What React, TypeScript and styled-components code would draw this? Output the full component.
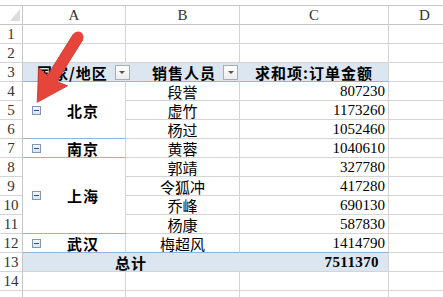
import React from 'react';
import styled, { createGlobalStyle, css } from 'styled-components';

const Global = createGlobalStyle`
  html, body {
    margin: 0;
    background: #fff;
    overflow: hidden;
  }
`;

const GRID = '#d4d4d4';
const BLUE_LINE = '#95b3d7';
const BAND = '#dce6f1';

type Place = { $r: number; $c: number; $cs?: number; $rs?: number };

// excel row n sits on grid row n + 2 (strip + column header come first)
const place = css<Place>`
  grid-row: ${(p) => p.$r + 2} / span ${(p) => p.$rs || 1};
  grid-column: ${(p) => p.$c} / span ${(p) => p.$cs || 1};
`;

const Sheet = styled.div`
  position: relative;
  display: grid;
  grid-template-columns: 23px 103px 114px 149px 72px;
  grid-template-rows: 6px 19px repeat(15, 19px);
  width: 443px;
  height: 297px;
  overflow: hidden;
  font-family: "Noto Sans CJK SC", "Noto Sans", sans-serif;
  color: #000;
`;

const Strip = styled.div`
  grid-row: 1;
  grid-column: 1 / -1;
  border-bottom: 1px solid #c6c6c6;
`;

const Corner = styled.div`
  grid-row: 2;
  grid-column: 1;
  display: flex;
  justify-content: flex-end;
  align-items: flex-end;
  padding: 0 2px 3px 0;
  border-right: 1px solid #c6c6c6;
  border-bottom: 1px solid #c6c6c6;
  &::after {
    content: '';
    width: 0;
    height: 0;
    border-left: 10px solid transparent;
    border-bottom: 12px solid #dcdcdc;
  }
`;

const ColHead = styled.div<{ $c: number }>`
  grid-row: 2;
  grid-column: ${(p) => p.$c};
  display: flex;
  align-items: center;
  justify-content: center;
  font-family: "Liberation Serif", serif;
  font-size: 15px;
  color: #333;
  border-right: 1px solid ${GRID};
  border-bottom: 1px solid #c6c6c6;
`;

const RowNum = styled.div<{ $r: number }>`
  grid-row: ${(p) => p.$r + 2};
  grid-column: 1;
  display: flex;
  align-items: center;
  justify-content: center;
  font-family: "Liberation Serif", serif;
  font-size: 15px;
  color: #333;
  border-right: 1px solid #c6c6c6;
  border-bottom: 1px solid ${GRID};
`;

const Cell = styled.div<Place>`
  ${place};
  border-right: 1px solid ${GRID};
  border-bottom: 1px solid ${GRID};
`;

const HeadCell = styled.div<Place & { $align: string; $pad?: number; $last?: boolean }>`
  ${place};
  display: flex;
  align-items: center;
  justify-content: ${(p) => p.$align};
  gap: 7px;
  padding-left: ${(p) => p.$pad || 0}px;
  background: ${BAND};
  border-right: 1px solid ${(p) => (p.$last ? GRID : BAND)};
  border-bottom: 1px solid ${BLUE_LINE};
  font-size: 15px;
  font-weight: bold;
  letter-spacing: 1px;
  white-space: nowrap;
  line-height: 1;
`;

const Label = styled.span<{ $grow?: boolean }>`
  flex: ${(p) => (p.$grow ? 1 : 'none')};
`;

const Dropdown = styled.span`
  flex: none;
  position: relative;
  width: 15px;
  height: 15px;
  box-sizing: border-box;
  border: 1px solid #acacac;
  background: linear-gradient(#ffffff, #ececec);
  display: flex;
  align-items: center;
  justify-content: center;
  margin-right: 1px;
  &::after {
    content: '';
    border-left: 3px solid transparent;
    border-right: 3px solid transparent;
    border-top: 3px solid #555;
    margin-top: 1px;
  }
`;

const GroupCell = styled.div<Place>`
  ${place};
  display: flex;
  align-items: center;
  padding-left: 9px;
  border-right: 1px solid ${GRID};
  border-bottom: 1px solid ${BLUE_LINE};
  font-size: 15px;
  font-weight: bold;
  letter-spacing: 1px;
  line-height: 1;
`;

const Collapse = styled.span`
  flex: none;
  width: 9px;
  height: 9px;
  box-sizing: border-box;
  border: 1px solid #8196b5;
  background: linear-gradient(#f4f7fb, #d9e2ee);
  display: flex;
  align-items: center;
  justify-content: center;
  &::after {
    content: '';
    width: 5px;
    height: 1px;
    background: #2f4f7f;
  }
`;

const City = styled.span`
  flex: 1;
  text-align: center;
`;

const NameCell = styled.div<Place & { $edge?: boolean }>`
  ${place};
  display: flex;
  align-items: center;
  justify-content: center;
  border-right: 1px solid ${GRID};
  border-bottom: 1px solid ${(p) => (p.$edge ? BLUE_LINE : GRID)};
  font-size: 15px;
  line-height: 1;
`;

const ValueCell = styled.div<Place & { $edge?: boolean }>`
  ${place};
  display: flex;
  align-items: center;
  justify-content: flex-end;
  padding-right: 3px;
  border-right: 1px solid ${GRID};
  border-bottom: 1px solid ${(p) => (p.$edge ? BLUE_LINE : GRID)};
  font-family: "Liberation Serif", serif;
  font-size: 15px;
  line-height: 1;
`;

const TotalCell = styled.div<Place & { $align: string; $pad?: number; $last?: boolean }>`
  ${place};
  display: flex;
  align-items: center;
  justify-content: ${(p) => p.$align};
  padding-right: ${(p) => p.$pad || 0}px;
  background: ${BAND};
  border-right: 1px solid ${(p) => (p.$last ? GRID : BAND)};
  border-bottom: 1px solid ${GRID};
  font-size: 15px;
  font-weight: bold;
  letter-spacing: 1px;
  line-height: 1;
`;

const Digits = styled.span`
  font-family: "Liberation Serif", serif;
  letter-spacing: 0.4px;
`;

const Arrow = styled.svg`
  position: absolute;
  left: 0;
  top: 0;
  pointer-events: none;
`;

const groups: { city: string; rows: [string, number][] }[] = [
  { city: '北京', rows: [['段誉', 807230], ['虚竹', 1173260], ['杨过', 1052460]] },
  { city: '南京', rows: [['黄蓉', 1040610]] },
  { city: '上海', rows: [['郭靖', 327780], ['令狐冲', 417280], ['乔峰', 690130], ['杨康', 587830]] },
  { city: '武汉', rows: [['梅超风', 1414790]] },
];

const App = () => {
  const cells: React.ReactNode[] = [];
  let r = 4;
  let total = 0;
  groups.forEach((g) => {
    cells.push(
      <GroupCell key={'g' + r} $r={r} $c={2} $rs={g.rows.length}>
        <Collapse />
        <City>{g.city}</City>
      </GroupCell>,
    );
    g.rows.forEach(([name, amount]) => {
      const edge = r === 12;
      total += amount;
      cells.push(
        <NameCell key={'n' + r} $r={r} $c={3} $edge={edge}>{name}</NameCell>,
        <ValueCell key={'v' + r} $r={r} $c={4} $edge={edge}>{amount}</ValueCell>,
        <Cell key={'d' + r} $r={r} $c={5} />,
      );
      r += 1;
    });
  });

  const plainRows = [1, 2, 14, 15];

  return (
    <>
      <Global />
      <Sheet>
        <Strip />
        <Corner />
        {['A', 'B', 'C', 'D'].map((l, i) => (
          <ColHead key={l} $c={i + 2}>{l}</ColHead>
        ))}
        {/* row 15 only peeks in at the bottom edge, its number is not visible */}
        {Array.from({ length: 15 }, (_, i) => (
          <RowNum key={i} $r={i + 1}>{i < 14 ? i + 1 : ''}</RowNum>
        ))}
        {plainRows.map((row) =>
          [2, 3, 4, 5].map((c) => <Cell key={row + '-' + c} $r={row} $c={c} />),
        )}

        <HeadCell $r={3} $c={2} $align="flex-start" $pad={14}>
          <Label $grow>国家/地区</Label>
          <Dropdown />
        </HeadCell>
        <HeadCell $r={3} $c={3} $align="flex-end">
          <Label>销售人员</Label>
          <Dropdown />
        </HeadCell>
        <HeadCell $r={3} $c={4} $align="center" $last>
          <Label>求和项:订单金额</Label>
        </HeadCell>
        <Cell $r={3} $c={5} />

        {cells}

        <TotalCell $r={13} $c={2} $cs={2} $align="center">总计</TotalCell>
        <TotalCell $r={13} $c={4} $align="flex-end" $pad={9} $last>
          <Digits>{total}</Digits>
        </TotalCell>
        <Cell $r={13} $c={5} />

        <Arrow width="443" height="297" viewBox="0 0 443 297">
          <g transform="translate(78 37) rotate(122)">
            <path
              d="M0 -5.5 L49 -5.5 L47 -17 L77 0 L47 17 L49 5.5 L0 5.5 Z"
              fill="#e5453a"
              stroke="#d23a30"
              strokeWidth="0.8"
              strokeLinejoin="round"
            />
            <circle cx="0" cy="0" r="5.5" fill="#e5453a" />
          </g>
        </Arrow>
      </Sheet>
    </>
  );
};

export default App;
